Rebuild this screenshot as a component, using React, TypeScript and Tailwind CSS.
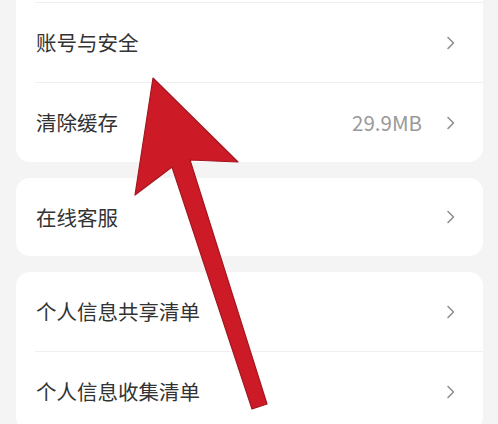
import React from "react";

const Chevron = () => (
  <svg width="10" height="14" viewBox="0 0 10 14" className="shrink-0">
    <path d="M2 1.5 L7.5 7 L2 12.5" fill="none" stroke="#8f8f8f" strokeWidth="1.6" strokeLinecap="round" strokeLinejoin="round" />
  </svg>
);

export default function App() {
  return (
    <div
      className="relative h-[424px] w-[498px] overflow-hidden bg-[#f4f4f4]"
      style={{ fontFamily: '"Noto Sans CJK SC", "Noto Sans", sans-serif' }}
    >
      <div className="flex flex-col gap-4 pl-4 pr-[15px] -mt-[77px]">
        <div className="rounded-[14px] bg-white">
          <div className="h-[79px]" />
          <div className="border-t border-[#efefef] ml-[19px]">
            <div className="flex h-[79px] items-center pl-px pr-[27px]">
              <span className="flex-1 text-[20.5px] text-[#333333] leading-none">账号与安全</span>
              <Chevron />
            </div>
          </div>
          <div className="border-t border-[#efefef] ml-[19px]">
            <div className="flex h-[79px] items-center pl-px pr-[27px]">
              <span className="flex-1 text-[20.5px] text-[#333333] leading-none">清除缓存</span>
              <span className="mr-[24px] text-[20.5px] text-[#999999] leading-none">29.9MB</span>
              <Chevron />
            </div>
          </div>
        </div>
        <div className="rounded-[14px] bg-white">
          <div className="flex h-[78px] items-center pl-5 pr-[27px]">
            <span className="flex-1 text-[20.5px] text-[#333333] leading-none">在线客服</span>
            <Chevron />
          </div>
        </div>
        <div className="rounded-[14px] bg-white">
          <div className="flex h-[79px] items-center pl-5 pr-[27px]">
            <span className="flex-1 text-[20.5px] text-[#333333] leading-none">个人信息共享清单</span>
            <Chevron />
          </div>
          <div className="border-t border-[#efefef] ml-[19px]">
            <div className="flex h-[79px] items-center pl-px pr-[27px]">
              <span className="flex-1 text-[20.5px] text-[#333333] leading-none">个人信息收集清单</span>
              <Chevron />
            </div>
          </div>
        </div>
      </div>
      <svg className="pointer-events-none absolute left-0 top-0" width="498" height="424" viewBox="0 0 498 424">
        <polygon
          points="153,78 238,162 190,160 267,404 252,409 172,167 135,195"
          fill="#cc1b27"
          stroke="#a3161f"
          strokeWidth="1.2"
          strokeLinejoin="round"
        />
      </svg>
    </div>
  );
}
